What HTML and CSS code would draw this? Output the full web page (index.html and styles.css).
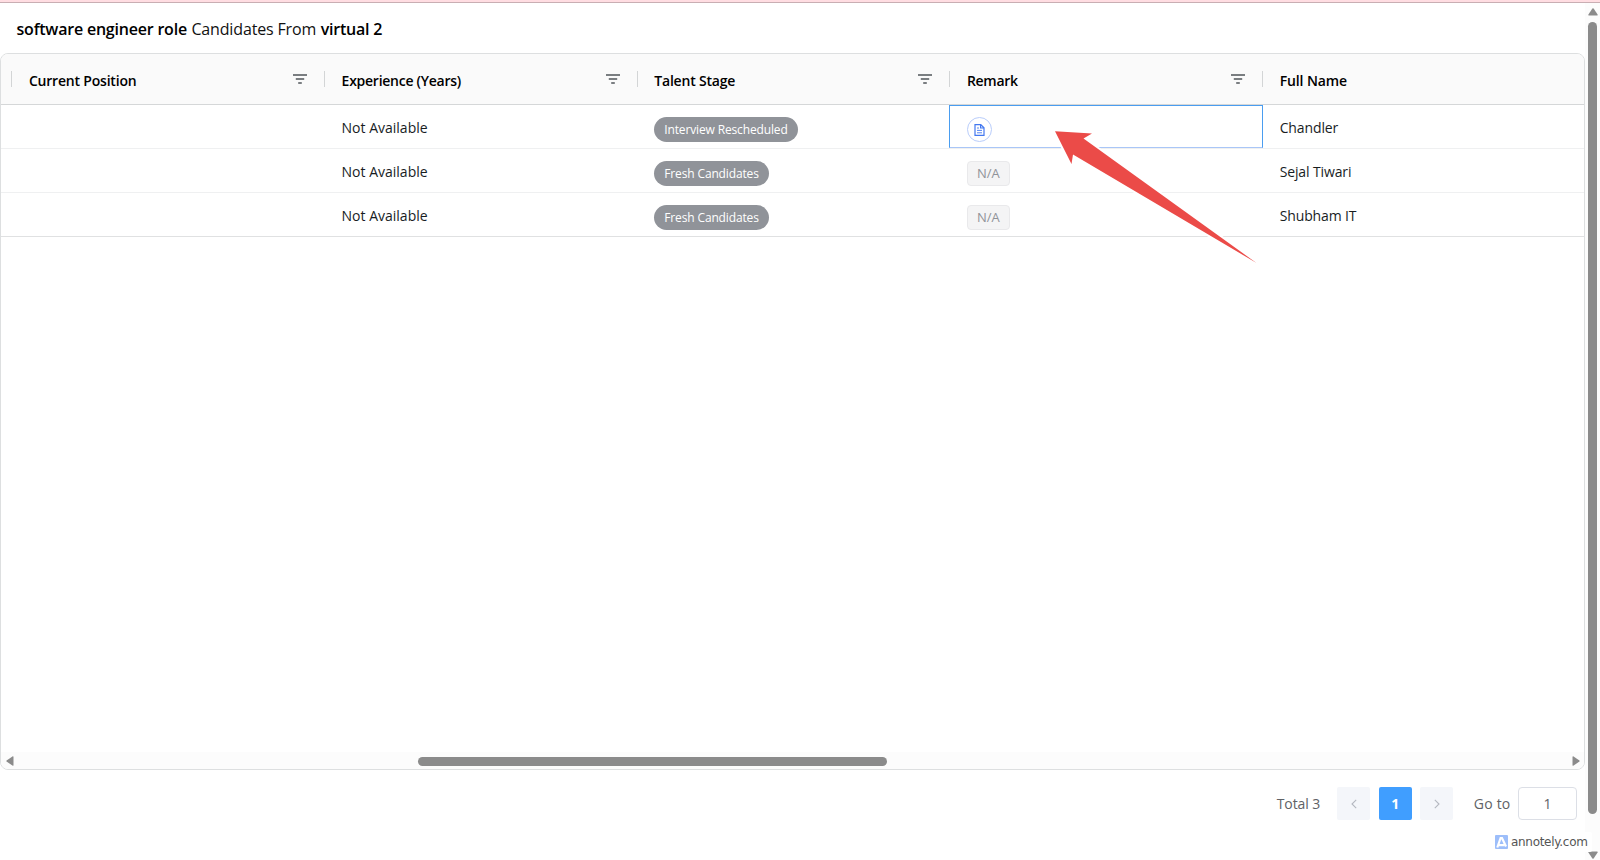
FILE: index.html
```html
<!DOCTYPE html>
<html lang="en">
<head>
<meta charset="utf-8">
<title>Candidates</title>
<link rel="stylesheet" href="styles.css">
</head>
<body>

<svg class="defs" width="0" height="0">
  <symbol id="filter" viewBox="0 0 14 10">
    <path d="M0 .9h14M2.8 5h8.4M5.2 9.1h3.6" fill="none" stroke="currentColor" stroke-width="1.5"/>
  </symbol>
</svg>

<div class="topline"></div>

<div class="page">
  <main class="content">
    <h1 class="title"><b>software engineer role</b> <span>Candidates From</span> <b>virtual 2</b></h1>

    <div class="grid">
      <div class="row head">
        <div class="cell"><span>Current Position</span><svg class="filter"><use href="#filter"/></svg></div>
        <div class="cell"><span class="years">Experience (Years)</span><svg class="filter"><use href="#filter"/></svg></div>
        <div class="cell"><span>Talent Stage</span><svg class="filter"><use href="#filter"/></svg></div>
        <div class="cell"><span class="remark">Remark</span><svg class="filter"><use href="#filter"/></svg></div>
        <div class="cell"><span class="full">Full Name</span></div>
      </div>

      <div class="row">
        <div class="cell"></div>
        <div class="cell"><span class="text">Not Available</span></div>
        <div class="cell"><span class="pill">Interview Rescheduled</span></div>
        <div class="cell focus">
          <span class="note">
            <svg width="11" height="12" viewBox="0 0 11 12" fill="none" stroke="currentColor">
              <path d="M1 .6h5.8L10 3.8v7.6H1zM6.6 .8V4H10" stroke-width="1.2"/>
              <path d="M3 4h2M3 6.4h5M3 8.8h5" stroke-width=".9"/>
            </svg>
          </span>
        </div>
        <div class="cell"><span class="text name">Chandler</span></div>
      </div>

      <div class="row">
        <div class="cell"></div>
        <div class="cell"><span class="text">Not Available</span></div>
        <div class="cell"><span class="pill">Fresh Candidates</span></div>
        <div class="cell"><span class="tag">N/A</span></div>
        <div class="cell"><span class="text name">Sejal Tiwari</span></div>
      </div>

      <div class="row last">
        <div class="cell"></div>
        <div class="cell"><span class="text">Not Available</span></div>
        <div class="cell"><span class="pill">Fresh Candidates</span></div>
        <div class="cell"><span class="tag">N/A</span></div>
        <div class="cell"><span class="text name">Shubham IT</span></div>
      </div>

      <div class="hscroll">
        <svg width="8" height="10" viewBox="0 0 8 10"><path d="M7.5 .8v8.4Q7.2 10 6.4 9.6L.6 5.6Q0 5 .6 4.4L6.4.4Q7.2 0 7.5.8z"/></svg>
        <div class="hthumb"></div>
        <svg class="right" width="8" height="10" viewBox="0 0 8 10"><path d="M.5 .8v8.4Q.8 10 1.6 9.6L7.4 5.6Q8 5 7.4 4.4L1.6.4Q.8 0 .5.8z"/></svg>
      </div>
    </div>

    <div class="pager">
      <span class="total">Total 3</span>
      <button class="btn"><svg width="6" height="10" viewBox="0 0 6 10"><path d="M5.2.8L1 5l4.2 4.2"/></svg></button>
      <button class="btn active">1</button>
      <button class="btn"><svg width="6" height="10" viewBox="0 0 6 10"><path d="M.8.8L5 5 .8 9.2"/></svg></button>
      <span class="goto">Go to</span>
      <input class="jump" type="text" value="1">
    </div>
  </main>

  <div class="vscroll">
    <svg width="10" height="8" viewBox="0 0 10 8"><path d="M.8 7.5h8.4Q10 7.2 9.6 6.4L5.6.6Q5 0 4.4.6L.4 6.4Q0 7.2.8 7.5z"/></svg>
    <div class="vthumb"></div>
    <svg class="down" width="10" height="8" viewBox="0 0 10 8"><path d="M.8.5h8.4Q10 .8 9.6 1.6L5.6 7.4Q5 8 4.4 7.4L.4 1.6Q0 .8.8.5z"/></svg>
  </div>
</div>

<!-- annotation layer -->
<svg class="arrow" width="210" height="140" viewBox="0 0 210 140">
  <path d="M5 5.3L42 7.5l-8.5 5L206.500 137 23 28.500 21.500 38z"/>
</svg>

<div class="mark">
  <svg width="13" height="14" viewBox="0 0 13 14">
    <rect width="13" height="14" rx="1" fill="#9dbefa"/>
    <path d="M2.300 12.500L5.600 3h1.400l4 8.500M3.800 10l5.500 .2" fill="none" stroke="#fff" stroke-width="2.200"/>
  </svg>
  <span>annotely.com</span>
</div>

</body>
</html>
```

FILE: styles.css
```css
* { box-sizing: border-box; }

body { margin: 0; height: 860px; overflow: hidden; background: #fff; color: #181d1f;
font: 14px/20px "Open Sans", "Noto Sans", sans-serif; }

.defs { display: block; height: 0; }
.topline { height: 3px; border-bottom: 1px solid #c9aeb3; background: #ffdde2; }

.page { display: flex; height: 857px; }
.content { width: 1585px; }

.title { display: flex; gap: 4.5px; height: 50px; margin: 0; padding: 15px 0 0 16.5px;
font-size: 16px; line-height: 22px; font-weight: 400; color: #111; }
.title b { font-weight: 600; color: #000; white-space: nowrap; letter-spacing: -.21px; }
.title span { white-space: nowrap; letter-spacing: -.15px; }

/* table */
.grid { display: flex; flex-direction: column; width: 1585px; height: 717px;
border: 1px solid #dddfe0; border-radius: 8px; overflow: hidden; }
.row { display: grid; grid-template-columns: repeat(4, 312.7px) 1fr; height: 43.9px;
padding-left: 10.4px; border-bottom: 1px solid #eff0f1; }
.row.last { border-color: #e0e1e2; }
.cell { display: flex; align-items: flex-start; padding: 12px 17px 0 17.5px; white-space: nowrap; }
.text { padding-top: 1px; }
.name { letter-spacing: -.12px; }

.head { height: 51px; background: #fafafa; border-color: #d5d7d8; font-weight: 600; color: #000; letter-spacing: -.2px; }
.head .cell { position: relative; padding-top: 17px; }
.head .cell::before { content: ""; position: absolute; left: 0; top: 17px; width: 1px; height: 16px; background: #d3d5d6; }
.head .years { letter-spacing: -.26px; }
.head .remark { letter-spacing: -.3px; }
.head .full { letter-spacing: -.1px; }
.filter { width: 14px; height: 10px; margin: 3px 0 0 auto; color: #50555a; }

.focus { margin-right: -1px; border: 1px solid #4a9df0; border-bottom-color: #a9c6f7; padding-left: 16.5px; padding-top: 11px; }

.pill { height: 25px; padding: 0 10px; border-radius: 13px; background: #909399; color: #fff;
font-size: 12px; line-height: 25px; letter-spacing: -.14px; }
.tag { height: 25px; padding: 0 9px; border: 1px solid #e9e9eb; border-radius: 4px; background: #f4f4f5;
color: #909399; font-size: 13px; line-height: 23px; }
.note { display: flex; align-items: center; justify-content: center; width: 25px; height: 25px;
border: 1px solid #b9cdfb; border-radius: 50%; color: #4378f0; }

.hscroll { display: flex; align-items: center; height: 17px; margin-top: auto; padding: 1px 4.5px 0 5px; background: #fcfcfc; }
.hscroll svg, .vscroll svg { fill: #8b8b8b; flex: none; }
.hthumb { width: 469px; height: 9px; margin-left: 404px; border-radius: 5px; background: #8b8b8b; }
.hscroll .right { margin-left: auto; }

/* pagination */
.pager { display: flex; align-items: center; justify-content: flex-end; height: 67px; padding-right: 8px; color: #606266; }
.total { margin-right: 17px; letter-spacing: -.1px; }
.btn { display: flex; align-items: center; justify-content: center; width: 33px; height: 33px; margin-right: 8.7px;
padding: 0; border: 0; border-radius: 2px; background: #f4f6fa; }
.btn path { fill: none; stroke: #b4b8c0; stroke-width: 1.1; }
.btn.active { background: #409eff; color: #fff; font: 700 14px "Open Sans", sans-serif; }
.goto { margin: 0 7.5px 0 11.7px; letter-spacing: .2px; }
.jump { width: 59px; height: 33px; border: 1px solid #dcdfe6; border-radius: 4px; background: #fff;
color: #606266; text-align: center; font: 14px "Open Sans", sans-serif; }

.vscroll { display: flex; flex-direction: column; align-items: center; width: 15px; padding: 5px 0 1px 0; background: #fcfcfc; }
.vthumb { width: 9px; height: 792px; margin-top: 6px; border-radius: 5px; background: #8b8b8b; }
.vscroll .down { margin-top: auto; }

/* annotation */
.arrow { position: absolute; left: 1050px; top: 126px; fill: #eb4b48; stroke: #fff; stroke-width: 4px; stroke-linejoin: round; paint-order: stroke; }
.mark { position: absolute; left: 1492px; top: 832px; display: flex; align-items: center; gap: 3px; width: 100px; height: 20px;
padding-left: 3px; background: #fff; border-radius: 2px; color: #555; font: 12px "DejaVu Sans", sans-serif; letter-spacing: -.3px; }
```
